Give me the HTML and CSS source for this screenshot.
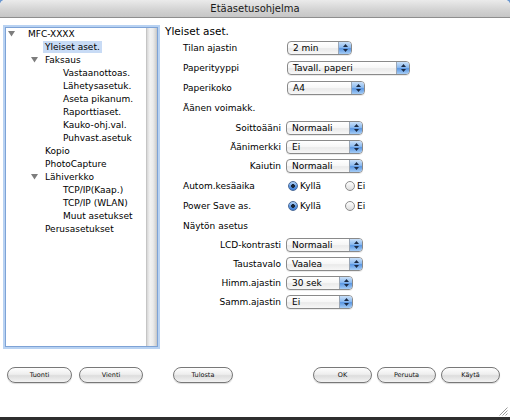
FILE: index.html
```html
<!DOCTYPE html>
<html lang="fi">
<head>
<meta charset="utf-8">
<title>Etäasetusohjelma</title>
<link rel="stylesheet" href="styles.css">
</head>
<body>
<div class="window">
  <div class="titlebar">Etäasetusohjelma</div>
  <div class="main">
    <div class="tree">
      <ul class="list">
        <li class="node lvl0"><span class="twisty"><svg width="7" height="6" viewBox="0 0 7 6"><polygon points="0,0 7,0 3.5,5.5" fill="#7d7d7d"/></svg></span><span class="txt">MFC-XXXX</span></li>
        <li class="node lvl1"><span class="twisty"></span><span class="txt sel">Yleiset aset.</span></li>
        <li class="node lvl1"><span class="twisty"><svg width="7" height="6" viewBox="0 0 7 6"><polygon points="0,0 7,0 3.5,5.5" fill="#7d7d7d"/></svg></span><span class="txt">Faksaus</span></li>
        <li class="node lvl2"><span class="twisty"></span><span class="txt">Vastaanottoas.</span></li>
        <li class="node lvl2"><span class="twisty"></span><span class="txt">Lähetysasetuk.</span></li>
        <li class="node lvl2"><span class="twisty"></span><span class="txt">Aseta pikanum.</span></li>
        <li class="node lvl2"><span class="twisty"></span><span class="txt">Raporttiaset.</span></li>
        <li class="node lvl2"><span class="twisty"></span><span class="txt">Kauko-ohj.val.</span></li>
        <li class="node lvl2"><span class="twisty"></span><span class="txt">Puhvast.asetuk</span></li>
        <li class="node lvl1"><span class="twisty"></span><span class="txt">Kopio</span></li>
        <li class="node lvl1"><span class="twisty"></span><span class="txt">PhotoCapture</span></li>
        <li class="node lvl1"><span class="twisty"><svg width="7" height="6" viewBox="0 0 7 6"><polygon points="0,0 7,0 3.5,5.5" fill="#7d7d7d"/></svg></span><span class="txt">Lähiverkko</span></li>
        <li class="node lvl2"><span class="twisty"></span><span class="txt">TCP/IP(Kaap.)</span></li>
        <li class="node lvl2"><span class="twisty"></span><span class="txt">TCP/IP (WLAN)</span></li>
        <li class="node lvl2"><span class="twisty"></span><span class="txt">Muut asetukset</span></li>
        <li class="node lvl1"><span class="twisty"></span><span class="txt">Perusasetukset</span></li>
      </ul>
      <div class="scrollbar"></div>
    </div>
    <div class="panel">
      <div class="heading">Yleiset aset.</div>
      <div class="group g-a">
        <div class="row"><span class="lbl">Tilan ajastin</span><div class="popup w65"><span class="val">2 min</span><span class="step"><svg width="7" height="10" viewBox="0 0 7 10"><polygon points="1,4 3.5,1 6,4" fill="#1c2b45"/><polygon points="1,6 3.5,9 6,6" fill="#1c2b45"/></svg></span></div></div>
        <div class="row"><span class="lbl">Paperityyppi</span><div class="popup w123"><span class="val">Tavall. paperi</span><span class="step"><svg width="7" height="10" viewBox="0 0 7 10"><polygon points="1,4 3.5,1 6,4" fill="#1c2b45"/><polygon points="1,6 3.5,9 6,6" fill="#1c2b45"/></svg></span></div></div>
        <div class="row"><span class="lbl">Paperikoko</span><div class="popup w78"><span class="val">A4</span><span class="step"><svg width="7" height="10" viewBox="0 0 7 10"><polygon points="1,4 3.5,1 6,4" fill="#1c2b45"/><polygon points="1,6 3.5,9 6,6" fill="#1c2b45"/></svg></span></div></div>
        <div class="row"><span class="lbl">Äänen voimakk.</span></div>
      </div>
      <div class="group g-b">
        <div class="row sub"><span class="lbl">Soittoääni</span><div class="popup w77"><span class="val">Normaali</span><span class="step"><svg width="7" height="10" viewBox="0 0 7 10"><polygon points="1,4 3.5,1 6,4" fill="#1c2b45"/><polygon points="1,6 3.5,9 6,6" fill="#1c2b45"/></svg></span></div></div>
        <div class="row sub"><span class="lbl">Äänimerkki</span><div class="popup w77"><span class="val">Ei</span><span class="step"><svg width="7" height="10" viewBox="0 0 7 10"><polygon points="1,4 3.5,1 6,4" fill="#1c2b45"/><polygon points="1,6 3.5,9 6,6" fill="#1c2b45"/></svg></span></div></div>
        <div class="row sub"><span class="lbl">Kaiutin</span><div class="popup w77"><span class="val">Normaali</span><span class="step"><svg width="7" height="10" viewBox="0 0 7 10"><polygon points="1,4 3.5,1 6,4" fill="#1c2b45"/><polygon points="1,6 3.5,9 6,6" fill="#1c2b45"/></svg></span></div></div>
      </div>
      <div class="group g-c">
        <div class="row"><span class="lbl">Autom.kesäaika</span><div class="radios"><span class="opt first"><span class="radio on"></span>Kyllä</span><span class="opt"><span class="radio"></span>Ei</span></div></div>
        <div class="row"><span class="lbl">Power Save as.</span><div class="radios"><span class="opt first"><span class="radio on"></span>Kyllä</span><span class="opt"><span class="radio"></span>Ei</span></div></div>
      </div>
      <div class="group g-d">
        <div class="row"><span class="lbl">Näytön asetus</span></div>
        <div class="row sub"><span class="lbl">LCD-kontrasti</span><div class="popup w77"><span class="val">Normaali</span><span class="step"><svg width="7" height="10" viewBox="0 0 7 10"><polygon points="1,4 3.5,1 6,4" fill="#1c2b45"/><polygon points="1,6 3.5,9 6,6" fill="#1c2b45"/></svg></span></div></div>
        <div class="row sub"><span class="lbl">Taustavalo</span><div class="popup w77"><span class="val">Vaalea</span><span class="step"><svg width="7" height="10" viewBox="0 0 7 10"><polygon points="1,4 3.5,1 6,4" fill="#1c2b45"/><polygon points="1,6 3.5,9 6,6" fill="#1c2b45"/></svg></span></div></div>
        <div class="row sub"><span class="lbl">Himm.ajastin</span><div class="popup w67"><span class="val">30 sek</span><span class="step"><svg width="7" height="10" viewBox="0 0 7 10"><polygon points="1,4 3.5,1 6,4" fill="#1c2b45"/><polygon points="1,6 3.5,9 6,6" fill="#1c2b45"/></svg></span></div></div>
        <div class="row sub"><span class="lbl">Samm.ajastin</span><div class="popup w67"><span class="val">Ei</span><span class="step"><svg width="7" height="10" viewBox="0 0 7 10"><polygon points="1,4 3.5,1 6,4" fill="#1c2b45"/><polygon points="1,6 3.5,9 6,6" fill="#1c2b45"/></svg></span></div></div>
      </div>
    </div>
  </div>
  <div class="buttons">
    <button class="btn b-tuonti">Tuonti</button>
    <button class="btn b-vienti">Vienti</button>
    <button class="btn b-tulosta">Tulosta</button>
    <span class="spacer"></span>
    <button class="btn b-ok">OK</button>
    <button class="btn b-peruuta">Peruuta</button>
    <button class="btn b-kayta">Käytä</button>
  </div>
  <div class="grip"><svg width="10" height="10" viewBox="0 0 10 10"><path d="M9.5 1.5 L1.5 9.5 M9.5 4.5 L4.5 9.5 M9.5 7.5 L7.5 9.5" stroke="#9a9a9a" stroke-width="1" fill="none"/></svg></div>
</div>
</body>
</html>
```

FILE: styles.css
```css
html {
  background: linear-gradient(#6b97cf 0 8px, #2f2f2f 8px);
}
body {
  margin: 0;
  width: 510px;
  height: 420px;
  font-family: "DejaVu Sans", "Noto Sans", sans-serif;
  font-size: 9px;
  color: #000;
}
.window {
  position: relative;
  height: 417px;
  background: #fff;
  border-radius: 5px 5px 0 0;
  overflow: hidden;
  display: flex;
  flex-direction: column;
}
.titlebar {
  flex: none;
  height: 17px;
  line-height: 18px;
  border-bottom: 1px solid #8e8e8e;
  background: linear-gradient(#ebebeb, #d2d2d2 60%, #c6c6c6);
  text-align: center;
  font-size: 10px;
  color: #1a1a1a;
}
.main {
  flex: none;
  height: 349px;
  box-sizing: border-box;
  display: flex;
  align-items: flex-start;
  padding: 6px 0 0 5px;
}
.tree {
  flex: none;
  margin-top: 3px;
  width: 153px;
  height: 320px;
  box-sizing: border-box;
  border: 1px solid #7ea3d6;
  box-shadow: 0 0 0 2px #b8d2f2;
  background: #fff;
  display: flex;
}
.list {
  flex: 1;
  list-style: none;
  margin: -1px 0 0 0;
  padding: 0;
}
.node {
  display: flex;
  align-items: center;
  height: 13px;
  white-space: nowrap;
}
.twisty {
  flex: none;
  display: flex;
  align-items: center;
}
.lvl0 { padding-left: 2px; }
.lvl0 .twisty { width: 20px; }
.lvl1 { padding-left: 25px; }
.lvl1 .twisty { width: 14px; }
.lvl2 { padding-left: 43px; }
.lvl2 .twisty { width: 14px; }
.txt.sel {
  background: #c8dbf5;
  margin-left: -2px;
  padding: 1px 2px;
}
.scrollbar {
  flex: none;
  width: 11px;
  background: linear-gradient(90deg, #b4b4b4 0, #d6d6d6 1px, #f3f3f3 4px, #ececec 7px, #d2d2d2 10px, #c2c2c2 11px);
}
.panel {
  margin-left: 7px;
  width: 330px;
}
.heading {
  height: 14px;
  line-height: 14px;
  font-size: 10.5px;
}
.row {
  display: flex;
  align-items: center;
  height: 20px;
  padding-left: 18px;
  white-space: nowrap;
}
.g-b .row, .g-d .row { height: 19px; }
.g-c { margin-top: 1px; }
.lbl {
  flex: none;
  width: 104px;
}
.row.sub .lbl {
  width: 98px;
  margin-right: 5px;
  text-align: right;
}
.popup {
  flex: none;
  height: 14px;
  box-sizing: border-box;
  border: 1px solid #8a8a8a;
  border-radius: 4px;
  display: flex;
  overflow: hidden;
  background: linear-gradient(#ffffff, #f6f6f6 50%, #eaeaea 55%, #f7f7f7);
  box-shadow: 0 1px 0 rgba(0, 0, 0, 0.08);
}
.w65 { width: 65px; }
.w67 { width: 67px; }
.w77 { width: 77px; }
.w78 { width: 78px; }
.w123 { width: 123px; }
.val {
  flex: 1;
  padding-left: 5px;
  line-height: 12px;
}
.step {
  flex: none;
  width: 12px;
  border-left: 1px solid #9aa6b5;
  background: linear-gradient(#c9e0f9, #8dbbf0 45%, #5b97e2 55%, #a6cdf6);
  display: flex;
  align-items: center;
  justify-content: center;
}
.radios {
  display: flex;
  align-items: center;
  margin-left: 1px;
}
.opt {
  display: flex;
  align-items: center;
  gap: 2px;
}
.opt.first { width: 57px; }
.radio {
  width: 10px;
  height: 10px;
  box-sizing: border-box;
  border-radius: 50%;
  border: 1px solid #8c8c8c;
  background: linear-gradient(#fdfdfd, #dedede);
}
.radio.on {
  border-color: #4a6a98;
  background: radial-gradient(circle, #18263a 0 1.6px, transparent 2.2px), linear-gradient(#b3d3f7, #5e98e2 55%, #3f7dd6);
}
.buttons {
  flex: none;
  display: flex;
  height: 16px;
  padding: 0 10px 0 7px;
}
.btn {
  flex: none;
  height: 16px;
  box-sizing: border-box;
  margin: 0;
  padding: 0;
  border: 1px solid #787878;
  border-radius: 8px;
  background: linear-gradient(#fefefe, #eeeeee 45%, #dddddd 55%, #f3f3f3);
  box-shadow: 0 1px 1px rgba(0, 0, 0, 0.15);
  font-family: "DejaVu Sans", sans-serif;
  font-size: 6.5px;
  color: #111;
  display: flex;
  align-items: center;
  justify-content: center;
}
.b-tuonti { width: 65px; }
.b-vienti { width: 64px; margin-left: 7px; }
.b-tulosta { width: 60px; margin-left: 30px; }
.spacer { flex: 1; }
.b-ok { width: 59px; }
.b-peruuta { width: 59px; margin-left: 5px; }
.b-kayta { width: 59px; margin-left: 5px; }
.grip {
  position: absolute;
  right: 2px;
  bottom: 1px;
  width: 10px;
  height: 10px;
}
```
